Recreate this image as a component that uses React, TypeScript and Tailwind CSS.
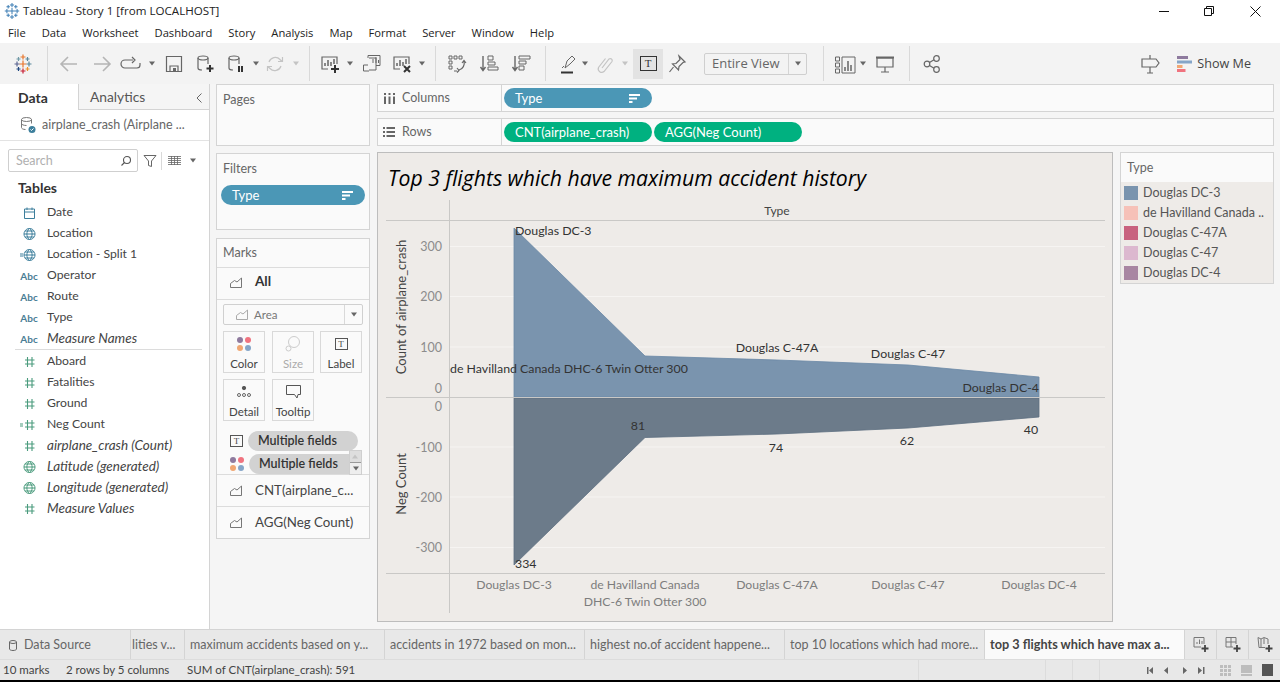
import React from 'react';

const ui = { fontFamily: '"Open Sans", "Noto Sans", sans-serif' };

const Ico: React.FC<{ children: React.ReactNode; className?: string; size?: number }> = ({ children, className = '', size = 22 }) => (
  <svg width={size} height={size} viewBox="0 0 22 22" fill="none" stroke="#666" strokeWidth="1.2" className={`shrink-0 ${className}`}>
    {children}
  </svg>
);

const Caret: React.FC<{ className?: string; light?: boolean }> = ({ className = '', light }) => (
  <svg width="8" height="5" viewBox="0 0 8 5" className={`shrink-0 ${className}`}>
    <path d="M1 0.5h6L4 4.5z" fill={light ? '#c4c4c4' : '#666'} />
  </svg>
);

const Sep: React.FC<{ className?: string }> = ({ className = '' }) => <div className={`w-px h-[35px] bg-[#d9d9d9] shrink-0 ${className}`} />;

const Cross: React.FC<{ x: number; y: number; c: string; r?: number }> = ({ x, y, c, r = 2.5 }) => (
  <path d={`M${x - r} ${y}h${r * 2}M${x} ${y - r}v${r * 2}`} stroke={c} strokeWidth="1.2" />
);

const TabLogo: React.FC<{ mono?: boolean; className?: string }> = ({ mono, className }) => (
  <Ico className={className}>
    <Cross x={11} y={11} c={mono ? '#3f7fb5' : '#e8762c'} r={3.5} />
    <Cross x={5} y={11} c={mono ? '#3f7fb5' : '#5b6591'} />
    <Cross x={17} y={11} c={mono ? '#3f7fb5' : '#59879b'} />
    <Cross x={11} y={4} c={mono ? '#3f7fb5' : '#e8762c'} />
    <Cross x={11} y={18} c={mono ? '#3f7fb5' : '#c72035'} />
    <Cross x={6.5} y={6} c={mono ? '#3f7fb5' : '#7099a6'} r={2} />
    <Cross x={15.5} y={6} c={mono ? '#3f7fb5' : '#5b879b'} r={2} />
    <Cross x={6.5} y={16} c={mono ? '#3f7fb5' : '#1f457e'} r={2} />
    <Cross x={15.5} y={16} c={mono ? '#3f7fb5' : '#eb912b'} r={2} />
  </Ico>
);

const Cylinder: React.FC = () => (
  <>
    <ellipse cx="9" cy="5" rx="5" ry="2" />
    <path d="M4 5v10c0 1.2 1.8 2 4 2M14 5v6" />
  </>
);

const BarsBox: React.FC = () => (
  <>
    <path d="M9 16H3V4h15v7" />
    <path d="M6 13v-3M9 13V7M12 13V9M15 11V6" strokeWidth="1.5" />
  </>
);

const Toolbar: React.FC = () => (
  <div className="h-[41px] bg-[#f3f3f3] flex items-center shrink-0 text-[#555]">
    <TabLogo className="ml-[12px]" />
    <Sep className="ml-[13px]" />
    <Ico className="ml-[10px]"><path d="M19 11H3M10 4l-7 7 7 7" stroke="#b5b5b5" strokeWidth="1.6" /></Ico>
    <Ico className="ml-[11px]"><path d="M3 11h16M12 4l7 7-7 7" stroke="#b5b5b5" strokeWidth="1.6" /></Ico>
    <Ico className="ml-[7px]"><path d="M13 7H5a3.500 3.500 0 0 0 0 8h12a3 3 0 0 0 3-3v-2M12 4l3 3-3 3" /></Ico>
    <Caret className="ml-[6px]" />
    <Ico className="ml-[7px]"><path d="M3.500 3.500h15v15h-15zM7 18v-5h8v5" /><path d="M10 15h3v3h-3z" fill="#666" stroke="none" /></Ico>
    <Ico className="ml-[9px]"><Cylinder /><path d="M16 12v7M12.500 15.500h7" strokeWidth="2" stroke="#333" /></Ico>
    <Ico className="ml-[9px]"><Cylinder /><path d="M14 13v6M17 13v6" strokeWidth="2" stroke="#333" /></Ico>
    <Caret className="ml-[5px]" />
    <Ico className="ml-[4px]"><path d="M5 9a6.500 6.500 0 0 1 11-2.500l2 2M17 13a6.500 6.500 0 0 1-11 2.500l-2-2M18.500 4v4.500H14M3.500 18v-4.500H8" stroke="#c4c4c4" /></Ico>
    <Caret className="ml-[6px]" light />
    <Sep className="ml-[9px]" />
    <Ico className="ml-[9px]"><BarsBox /><path d="M16 12v8M12 16h8" strokeWidth="2" stroke="#333" /></Ico>
    <Caret className="ml-[5px]" />
    <Ico className="ml-[7px]"><path d="M7 5V2.500h12v10h-4M8 5h7v12H8M2.500 12H7M2.500 12v6H8" strokeWidth="1" /><path d="M12 10V6M15 10V4M17.500 10V7" strokeWidth="1" /></Ico>
    <Ico className="ml-[8px]"><BarsBox /><path d="M13 13l6 6M19 13l-6 6" strokeWidth="2" stroke="#333" /></Ico>
    <Caret className="ml-[5px]" />
    <Sep className="ml-[9px]" />
    <Ico className="ml-[10px]"><path d="M3 3h3v3H3zM8 3h3v3H8zM13 3h3v3h-3zM3 8h3v3H3zM3 13h3v3H3zM8 18h3" strokeWidth="1" /><path d="M18 8c1 4-1 8-5 9M11 15l2 2.500-2 2M16 10l2-2.500 2 2.500" strokeWidth="1.200" /></Ico>
    <Ico className="ml-[10px]"><path d="M5 3v14M2.500 14l2.500 3.500L7.500 14" strokeWidth="1.400" /><path d="M10 3h5v4h-5zM10 9h7v3h-7zM10 14h10v3H10z" strokeWidth="1" /></Ico>
    <Ico className="ml-[10px]"><path d="M5 3v14M2.500 14l2.500 3.500L7.500 14" strokeWidth="1.400" /><path d="M9 3h11v3H9zM9 8h7v3H9zM9 13h5v4H9z" strokeWidth="1" /></Ico>
    <Sep className="ml-[13px]" />
    <Ico className="ml-[11px]"><path d="M8 15l2-7 5-5 3 3-5 5-5 4zM5 15l2-2" strokeWidth="1" /><path d="M4 19.500h12" strokeWidth="2" stroke="#333" /></Ico>
    <Caret className="ml-[2px]" />
    <Ico className="ml-[5px]"><path d="M8 15l7-9a2 2 0 0 1 3 2.500l-8 10a3.500 3.500 0 0 1-5.500-4l7-9" stroke="#c4c4c4" /></Ico>
    <Caret className="ml-[5px]" light />
    <div className="ml-[4px] w-[30px] h-[30px] bg-[#e3e3e3] flex items-center justify-center shrink-0">
      <div className="w-[17px] h-[15px] border border-[#333] flex items-center justify-center text-[11px] leading-none text-[#333]" style={{ fontFamily: '"Liberation Serif", serif' }}>T</div>
    </div>
    <Ico className="ml-[3px]"><path d="M13 3l6 6-2 .5-4 4-.5 3.500-6-6 3.500-.5 4-4zM7.500 14L3.500 19" strokeWidth="1.200" /></Ico>
    <div className="ml-[16px] w-[103px] h-[22px] border border-[#cfcfcf] rounded-[2px] flex items-center shrink-0 text-[13px] text-[#666]" style={ui}>
      <span className="flex-1 pl-[7px] leading-none">Entire View</span>
      <div className="w-[18px] h-full border-l border-[#d5d5d5] flex items-center justify-center"><Caret /></div>
    </div>
    <Sep className="ml-[16px]" />
    <Ico className="ml-[10px]"><path d="M1.500 4h4v4h-4zM1.500 10h4v4h-4zM1.500 16h4v4h-4zM8 4h13v16H8z" strokeWidth="1" /><path d="M11 18v-4M14 18V8M17 18v-6" strokeWidth="1.500" /></Ico>
    <Caret className="ml-[3px]" />
    <Ico className="ml-[7px]"><path d="M3 5h16v9H3zM11 14v5M7 19h8" /><path d="M2 4.500h18" strokeWidth="2" /></Ico>
    <Sep className="ml-[13px]" />
    <Ico className="ml-[11px]"><circle cx="6" cy="11" r="2.800" /><circle cx="15.500" cy="5.500" r="2.800" /><circle cx="15.500" cy="16.500" r="2.800" /><path d="M8.500 9.500l4.500-2.700M8.500 12.500l4.500 2.700" /></Ico>
    <Ico className="ml-auto"><path d="M11 2v4M11 14v6M8 20h6M3 6h14l3 4-3 4H3z" strokeWidth="1.200" /></Ico>
    <svg width="15" height="16" viewBox="0 0 15 16" className="ml-[16px] shrink-0">
      <path d="M0 0h11v3H0z" fill="#8e7a9e" />
      <path d="M0 4.500h15v3H0z" fill="#85a5c8" />
      <path d="M0 9h5.500v3H0z" fill="#f0a773" />
      <path d="M0 13h8.500v3H0z" fill="#f0737f" />
    </svg>
    <span className="ml-[5px] mr-[29px] pt-[1px] text-[12.600px] leading-none text-[#444]" style={ui}>Show Me</span>
  </div>
);

type FieldKind = 'date' | 'geo' | 'geoCalc' | 'abc' | 'num' | 'numCalc' | 'geoGreen';

const FieldIcon: React.FC<{ kind: FieldKind }> = ({ kind }) => {
  if (kind === 'abc') return <span className="w-[30px] text-center text-[10px] font-bold leading-none text-[#4a7d95]">Abc</span>;
  const color = kind === 'date' || kind === 'geo' || kind === 'geoCalc' ? '#3d7f9c' : '#4a9b7d';
  return (
    <svg width="30" height="14" viewBox="0 0 30 14" fill="none" stroke={color} strokeWidth="1" className="shrink-0">
      {kind === 'date' && <path d="M10.500 3h10v9.500h-10zM10.500 6h10M13 1.500v2.500M18 1.500v2.500" />}
      {(kind === 'geo' || kind === 'geoCalc' || kind === 'geoGreen') && (
        <path d="M15.500 1.500a5.500 5.500 0 1 0 .01 0zM10 7h11M15.500 1.500c-3.500 3-3.500 8 0 11M15.500 1.500c3.500 3 3.500 8 0 11M11 4h9M11 10h9" />
      )}
      {(kind === 'num' || kind === 'numCalc') && <path d="M13.500 2v10M18 2v10M11 5h9.500M11 9h9.500" strokeWidth="1.100" />}
      {(kind === 'geoCalc' || kind === 'numCalc') && <path d="M6 6h3M6 8h3" />}
    </svg>
  );
};

const fields: { name: string; kind: FieldKind; italic?: boolean }[] = [
  { name: 'Date', kind: 'date' },
  { name: 'Location', kind: 'geo' },
  { name: 'Location - Split 1', kind: 'geoCalc' },
  { name: 'Operator', kind: 'abc' },
  { name: 'Route', kind: 'abc' },
  { name: 'Type', kind: 'abc' },
  { name: 'Measure Names', kind: 'abc', italic: true },
];

const measures: { name: string; kind: FieldKind; italic?: boolean }[] = [
  { name: 'Aboard', kind: 'num' },
  { name: 'Fatalities', kind: 'num' },
  { name: 'Ground', kind: 'num' },
  { name: 'Neg Count', kind: 'numCalc' },
  { name: 'airplane_crash (Count)', kind: 'num', italic: true },
  { name: 'Latitude (generated)', kind: 'geoGreen', italic: true },
  { name: 'Longitude (generated)', kind: 'geoGreen', italic: true },
  { name: 'Measure Values', kind: 'num', italic: true },
];

const FieldRow: React.FC<{ name: string; kind: FieldKind; italic?: boolean }> = ({ name, kind, italic }) => (
  <div className="h-[21px] flex items-center pl-[14px]">
    <FieldIcon kind={kind} />
    <span className={`ml-[3px] leading-none text-[#444] whitespace-nowrap ${italic ? 'italic text-[13.500px]' : 'text-[12.200px]'}`}>{name}</span>
  </div>
);

const DataPane: React.FC = () => (
  <div className="w-[210px] shrink-0 bg-white border-r border-[#d4d4d4] flex flex-col">
    <div className="h-[26px] flex shrink-0">
      <div className="w-[78px] pl-[18px] flex items-center text-[14px] font-bold text-[#333]">Data</div>
      <div className="flex-1 bg-[#f5f5f5] border-l border-b border-[#d4d4d4] pl-[11px] pr-[6px] pt-[2px] flex items-center justify-between text-[13.800px] text-[#555]">
        <span>Analytics</span>
        <svg width="8" height="12" viewBox="0 0 8 12" fill="none" stroke="#666"><path d="M6.500 1.500L2 6l4.500 4.500" /></svg>
      </div>
    </div>
    <div className="h-[31px] flex items-center pl-[19px] border-b border-[#e3e3e3] shrink-0">
      <svg width="18" height="18" viewBox="0 0 18 18" fill="none" stroke="#777" strokeWidth="1" className="shrink-0">
        <ellipse cx="7.500" cy="3.500" rx="5" ry="2" />
        <path d="M2.500 3.500v8c0 1 1.500 2 4 2M12.500 3.500v4M2.500 7.500c0 1 2 2 5 2" />
        <circle cx="13" cy="13.500" r="3.500" fill="#3d7f9c" stroke="none" />
        <path d="M11.500 13.500l1 1 2-2" stroke="#fff" />
      </svg>
      <span className="ml-[5px] text-[12.500px] leading-none text-[#666] whitespace-nowrap">airplane_crash (Airplane ...</span>
    </div>
    <div className="flex items-center pl-[8px] mt-[8px] shrink-0">
      <div className="w-[130px] h-[23px] border border-[#cfcfcf] rounded-[2px] flex items-center justify-between pl-[7px] pr-[5px] pt-[1px] text-[12.500px] text-[#b0b0b0]">
        <span className="leading-none">Search</span>
        <svg width="12" height="12" viewBox="0 0 12 12" fill="none" stroke="#555" strokeWidth="1.100"><circle cx="7" cy="5" r="3.500" /><path d="M4.500 7.500L1.500 10.500" /></svg>
      </div>
      <svg width="14" height="14" viewBox="0 0 14 14" fill="none" stroke="#666" className="ml-[5px] shrink-0"><path d="M1 1.500h12L8.500 7v5.500l-3-1V7z" /></svg>
      <div className="ml-[4px] w-px h-[18px] bg-[#d9d9d9]" />
      <svg width="13" height="9" viewBox="0 0 13 9" fill="none" stroke="#666" className="ml-[6px] shrink-0"><path d="M0 .5h13M0 2.500h13M0 4.500h13M0 6.500h13M0 8.500h13M3.500 0v9M6.500 0v9M9.500 0v9" strokeWidth=".8" /></svg>
      <Caret className="ml-[8px]" />
    </div>
    <div className="mt-[6px] ml-[18px] h-[20px] flex items-center text-[14px] font-bold text-[#333] leading-none shrink-0">Tables</div>
    <div className="mt-[4px] shrink-0">
      {fields.map(f => <FieldRow key={f.name} {...f} />)}
    </div>
    <div className="ml-[15px] mr-[7px] h-px bg-[#dcdcdc] mb-[1px] shrink-0" />
    <div className="shrink-0">
      {measures.map(f => <FieldRow key={f.name} {...f} />)}
    </div>
  </div>
);

const SortGlyph: React.FC = () => (
  <svg width="11" height="9" viewBox="0 0 11 9" fill="#fff" className="shrink-0"><path d="M0 0h11v2H0zM0 3.500h8v2H0zM0 7h3.500v2H0z" /></svg>
);

const Pill: React.FC<{ label: string; className: string; sort?: boolean }> = ({ label, className, sort }) => (
  <div className={`h-[20px] rounded-full flex items-center justify-between pl-[11px] pr-[12px] text-[13px] text-white leading-none shrink-0 ${className}`}>
    <span className="whitespace-nowrap">{label}</span>
    {sort && <SortGlyph />}
  </div>
);

const AreaGlyph: React.FC<{ light?: boolean }> = ({ light }) => (
  <svg width="12" height="11" viewBox="0 0 12 11" fill="none" stroke={light ? '#aaa' : '#777'} className="shrink-0"><path d="M.5 10.500v-4l4-3 2.500 1.500 4.500-4v9.500z" /></svg>
);

const MarkBtn: React.FC<{ label: string; children: React.ReactNode; muted?: boolean; className?: string }> = ({ label, children, muted, className = '' }) => (
  <div className={`w-[42px] h-[42px] border border-[#d9d9d9] flex flex-col items-center justify-end text-[11.500px] leading-[16px] ${muted ? 'text-[#aaa]' : 'text-[#444]'} ${className}`}>
    <div className="flex-1 flex items-center justify-center">{children}</div>
    <span>{label}</span>
  </div>
);

const Dots: React.FC = () => (
  <svg width="16" height="16" viewBox="0 0 16 16" className="shrink-0">
    <circle cx="4" cy="4" r="3" fill="#8e7a9e" />
    <circle cx="12" cy="4" r="3" fill="#f0737f" />
    <circle cx="4" cy="12" r="3" fill="#f0a773" />
    <circle cx="12" cy="12" r="3" fill="#85a5c8" />
  </svg>
);

const TBox: React.FC = () => (
  <div className="w-[13px] h-[12px] border border-[#555] flex items-center justify-center text-[9px] leading-none text-[#444]" style={{ fontFamily: '"Liberation Serif", serif' }}>T</div>
);

const Card: React.FC<{ title: string; className: string; children?: React.ReactNode }> = ({ title, className, children }) => (
  <div className={`border border-[#d4d4d4] bg-[#fafafa] shrink-0 ${className}`}>
    <div className="pl-[6px] h-[31px] flex items-center text-[12.500px] text-[#666] leading-none">{title}</div>
    {children}
  </div>
);

const ShelvesColumn: React.FC = () => (
  <div className="w-[154px] ml-[6px] flex flex-col shrink-0">
    <Card title="Pages" className="h-[62px]" />
    <Card title="Filters" className="h-[77px] mt-[7px]">
      <div className="px-[4px]"><Pill label="Type" sort className="bg-[#4b97b6]" /></div>
    </Card>
    <div className="h-[301px] mt-[8px] border border-[#d4d4d4] bg-[#fafafa] flex flex-col relative">
      <div className="pl-[6px] h-[29px] flex items-center text-[12.500px] text-[#666] leading-none border-b border-[#dcdcdc] shrink-0">Marks</div>
      <div className="h-[32px] flex items-center pl-[13px] pb-[3px] border-b border-[#dcdcdc] shrink-0">
        <AreaGlyph />
        <span className="ml-[13px] text-[13.500px] font-bold text-[#333] leading-none">All</span>
      </div>
      <div className="mt-[4px] mx-[6px] h-[21px] w-[140px] border border-[#d0d0d0] rounded-[2px] flex items-center shrink-0">
        <span className="ml-[12px]"><AreaGlyph light /></span>
        <span className="ml-[6px] flex-1 text-[11.500px] text-[#777] leading-none">Area</span>
        <div className="w-[18px] h-full border-l border-[#d9d9d9] flex items-center justify-center"><Caret /></div>
      </div>
      <div className="mt-[6px] ml-[6px] flex gap-x-[6px] shrink-0">
        <MarkBtn label="Color"><Dots /></MarkBtn>
        <MarkBtn label="Size" muted className="ml-[1px]">
          <svg width="18" height="18" viewBox="0 0 18 18" fill="none" stroke="#ccc"><circle cx="10" cy="7" r="5.500" /><circle cx="4.500" cy="13.500" r="2.500" /></svg>
        </MarkBtn>
        <MarkBtn label="Label"><TBox /></MarkBtn>
      </div>
      <div className="mt-[6px] ml-[6px] flex gap-x-[6px] shrink-0">
        <MarkBtn label="Detail">
          <svg width="14" height="12" viewBox="0 0 14 12" fill="none" stroke="#555" strokeWidth=".9"><circle cx="7" cy="2" r="1.700" fill="#555" /><circle cx="2" cy="9" r="1.500" /><circle cx="7" cy="9" r="1.500" /><circle cx="12" cy="9" r="1.500" /></svg>
        </MarkBtn>
        <MarkBtn label="Tooltip" className="ml-[1px]">
          <svg width="15" height="14" viewBox="0 0 15 14" fill="none" stroke="#555"><path d="M.5.500h14v9h-2.500l-1 3.500-2.500-3.500H.5z" /></svg>
        </MarkBtn>
      </div>
      <div className="mt-[10px] flex items-center pl-[13px] shrink-0">
        <TBox />
        <div className="ml-[5px] w-[110px] h-[20px] rounded-full bg-[#d2d2d2] pl-[10px] flex items-center text-[12.500px] text-[#333] font-semibold leading-none">Multiple fields</div>
      </div>
      <div className="mt-[3px] flex items-center pl-[12px] shrink-0">
        <Dots />
        <div className="ml-[4px] w-[112px] h-[20px] rounded-l-full bg-[#d2d2d2] pl-[10px] flex items-center text-[12.500px] text-[#333] font-semibold leading-none">Multiple fields</div>
      </div>
      <div className="absolute left-[132px] top-[211px] w-[13px] h-[25px] border border-[#cfcfcf] bg-[#dedede] flex flex-col">
        <div className="flex-1 flex items-center justify-center rotate-180"><Caret light /></div>
        <div className="flex-1 flex items-center justify-center bg-[#eeeeee] border-t border-[#999]"><Caret /></div>
      </div>
      <div className="h-[32px] border-t border-[#dcdcdc] flex items-center pl-[13px] shrink-0">
        <AreaGlyph />
        <span className="ml-[13px] text-[13.300px] text-[#444] leading-none whitespace-nowrap">CNT(airplane_c...</span>
      </div>
      <div className="h-[32px] border-t border-[#dcdcdc] flex items-center pl-[13px] shrink-0">
        <AreaGlyph />
        <span className="ml-[13px] text-[13.300px] text-[#444] leading-none whitespace-nowrap">AGG(Neg Count)</span>
      </div>
    </div>
  </div>
);

const Shelf: React.FC<{ label: string; icon: React.ReactNode; children: React.ReactNode; className?: string }> = ({ label, icon, children, className = '' }) => (
  <div className={`h-[28px] border border-[#d4d4d4] bg-[#fafafa] flex shrink-0 ${className}`}>
    <div className="w-[124px] border-r border-[#d4d4d4] flex items-center pl-[5px] text-[12.500px] text-[#666] leading-none shrink-0">
      <span className="w-[12px] flex justify-center">{icon}</span>
      <span className="ml-[7px]">{label}</span>
    </div>
    <div className="flex items-center pl-[2px] gap-x-[2px]">{children}</div>
  </div>
);

const tickText = 'fill-[#8c8c8c] text-[12.500px]';
const xText = 'fill-[#7d7d7d] text-[12.200px]';
const markText = 'fill-[#333] text-[12.350px]';

const Chart: React.FC = () => (
  <svg width="734" height="421" viewBox="378 200 734 421" style={{ fontFamily: 'Lato, sans-serif' }} className="shrink-0">
    {[246.5, 296.5, 347, 447, 497, 547.5].map(y => (
      <path key={y} d={`M450 ${y}H1105`} stroke="#f6f4f2" strokeWidth="1" />
    ))}
    <path d="M514 397V228L645 356L777 360L908 365L1039 377V397Z" fill="#7a94ae" stroke="#6a88a6" strokeWidth=".8" />
    <path d="M514 398V565L645 437.500L777 434L908 428L1039 417V398Z" fill="#6c7b8a" stroke="#5d6e80" strokeWidth=".8" />
    <path d="M449.500 200V613M386 220.500H1105M386 397.500H1105M386 573.500H1105" stroke="#c9c8c6" strokeWidth="1" />
    <text x="777" y="215" textAnchor="middle" className="fill-[#444] text-[12px]">Type</text>
    <text transform="translate(406 307) rotate(-90)" textAnchor="middle" className="fill-[#444] text-[13px]">Count of airplane_crash</text>
    <text transform="translate(406 484) rotate(-90)" textAnchor="middle" className="fill-[#444] text-[13px]">Neg Count</text>
    {[['300', 251], ['200', 301], ['100', 352], ['0', 393], ['0', 411], ['-100', 452], ['-200', 502], ['-300', 552]].map(([t, y]) => (
      <text key={`${t}${y}`} x="442" y={y} textAnchor="end" className={tickText}>{t}</text>
    ))}
    <text x="515" y="235" className={markText}>Douglas DC-3</text>
    <text x="450" y="373" className={markText}>de Havilland Canada DHC-6 Twin Otter 300</text>
    <text x="777" y="352" textAnchor="middle" className={markText}>Douglas C-47A</text>
    <text x="908" y="358" textAnchor="middle" className={markText}>Douglas C-47</text>
    <text x="1039" y="392" textAnchor="end" className={markText}>Douglas DC-4</text>
    <text x="638" y="430" textAnchor="middle" className={markText}>81</text>
    <text x="776" y="452" textAnchor="middle" className={markText}>74</text>
    <text x="907" y="445" textAnchor="middle" className={markText}>62</text>
    <text x="1031" y="434" textAnchor="middle" className={markText}>40</text>
    <text x="515" y="568" className={markText}>334</text>
    <text x="514" y="589" textAnchor="middle" className={xText}>Douglas DC-3</text>
    <text x="645" y="589" textAnchor="middle" className={xText}>de Havilland Canada</text>
    <text x="645" y="606" textAnchor="middle" className={xText}>DHC-6 Twin Otter 300</text>
    <text x="777" y="589" textAnchor="middle" className={xText}>Douglas C-47A</text>
    <text x="908" y="589" textAnchor="middle" className={xText}>Douglas C-47</text>
    <text x="1039" y="589" textAnchor="middle" className={xText}>Douglas DC-4</text>
  </svg>
);

const legend = [
  { name: 'Douglas DC-3', swatch: 'bg-[#7a94ae]' },
  { name: 'de Havilland Canada ..', swatch: 'bg-[#f6c1b8]' },
  { name: 'Douglas C-47A', swatch: 'bg-[#c8627f]' },
  { name: 'Douglas C-47', swatch: 'bg-[#dcb8cf]' },
  { name: 'Douglas DC-4', swatch: 'bg-[#a886a2]' },
];

const Workspace: React.FC = () => (
  <div className="ml-[7px] flex-1 flex flex-col min-w-0 pr-[6px]">
    <Shelf label="Columns" icon={<svg width="11" height="11" viewBox="0 0 11 11" fill="#666"><path d="M0 0h2v2H0zM4.500 0h2v2h-2zM9 0h2v2H9zM0 3.500h2V11H0zM4.500 3.500h2V11h-2zM9 3.500h2V11H9z" /></svg>}>
      <Pill label="Type" sort className="w-[148px] bg-[#4b97b6]" />
    </Shelf>
    <Shelf label="Rows" className="mt-[6px]" icon={<svg width="12" height="10" viewBox="0 0 12 10" fill="#666"><path d="M0 0h2v2H0zM3.500 0H12v2H3.500zM0 4h2v2H0zM3.500 4H12v2H3.500zM0 8h2v2H0zM3.500 8H12v2H3.500z" /></svg>}>
      <Pill label="CNT(airplane_crash)" className="w-[148px] bg-[#00b180]" />
      <Pill label="AGG(Neg Count)" className="w-[148px] bg-[#00b180]" />
    </Shelf>
    <div className="mt-[6px] flex items-start">
      <div className="w-[736px] h-[470px] border border-[#bdbdbd] bg-[#eeebe8] flex flex-col shrink-0">
        <div className="h-[47px] pl-[10px] pt-[9px] text-[21.200px] italic font-medium leading-[32px] text-black whitespace-nowrap shrink-0" style={{ fontFamily: '"Open Sans", sans-serif' }}>Top 3 flights which have maximum accident history</div>
        <Chart />
      </div>
      <div className="ml-[7px] w-[154px] h-[132px] border border-[#d4d4d4] flex flex-col shrink-0">
        <div className="h-[29px] bg-[#fafafa] pl-[6px] pt-[2px] flex items-center text-[12.500px] text-[#666] leading-none shrink-0">Type</div>
        <div className="flex-1 bg-[#eeebe8] pl-[3px] pt-[1px]">
          {legend.map(l => (
            <div key={l.name} className="h-[20px] flex items-center">
              <div className={`w-[14px] h-[14px] ${l.swatch} shrink-0`} />
              <span className="ml-[5px] text-[12.500px] text-[#555] leading-none whitespace-nowrap">{l.name}</span>
            </div>
          ))}
        </div>
      </div>
    </div>
  </div>
);

const tabs = [
  { name: 'lities v...', w: 'w-[54px] pl-[1px]' },
  { name: 'maximum accidents based on y...', w: 'w-[200px] pl-[5px]' },
  { name: 'accidents in 1972 based on mon...', w: 'w-[200px] pl-[5px]' },
  { name: 'highest no.of accident happene...', w: 'w-[200px] pl-[5px]' },
  { name: 'top 10 locations which had more...', w: 'w-[200px] pl-[5px]' },
];

const SheetTabs: React.FC = () => (
  <div className="h-[30px] bg-[#e8e8e8] border-t border-[#d4d4d4] flex shrink-0 text-[12.500px] text-[#666]">
    <div className="w-[131px] flex items-center pl-[9px] pt-[2px] border-r border-[#d4d4d4] shrink-0">
      <svg width="8" height="11" viewBox="0 0 8 11" fill="none" stroke="#666" className="shrink-0"><ellipse cx="4" cy="2" rx="3.500" ry="1.500" /><path d="M.5 2v7c0 .8 1.500 1.500 3.500 1.500s3.500-.7 3.500-1.500V2" /></svg>
      <span className="ml-[7px] leading-none">Data Source</span>
    </div>
    {tabs.map(t => (
      <div key={t.name} className={`${t.w} flex items-center pt-[2px] border-r border-[#d4d4d4] whitespace-nowrap overflow-hidden shrink-0`}>
        <span className="leading-none">{t.name}</span>
      </div>
    ))}
    <div className="w-[199px] bg-[#fafafa] pl-[5px] flex items-center font-bold text-[#444] text-[12.700px] leading-none whitespace-nowrap shrink-0">top 3 flights which have max a...</div>
    {[0, 1, 2].map(i => (
      <div key={i} className="flex-1 border-l border-[#d4d4d4] flex items-center justify-center">
        <svg width="17" height="17" viewBox="0 0 17 17" fill="none" stroke="#777" strokeWidth="1">
          {i === 0 && <path d="M9 11H2V1.500h10V8M5 8V6M7.500 8V3.500M10 8V5" />}
          {i === 1 && <path d="M9 11H2V1.500h10V8M2 6h10M7 1.500V11" />}
          {i === 2 && <path d="M9 11.500H3l-1-10 3 1.500 3-1.500 4 1.500V8M5 3v8M8 2v6" />}
          <path d="M13 9v7M9.500 12.500h7" stroke="#444" strokeWidth="1.800" />
        </svg>
      </div>
    ))}
  </div>
);

const StatusBar: React.FC = () => (
  <div className="h-[21px] bg-[#e8e8e8] border-t border-[#dcdcdc] flex items-center text-[11.500px] text-[#444] shrink-0 relative" style={{ fontFamily: 'Lato, sans-serif' }}>
    <span className="ml-[3px] w-[63px] leading-none">10 marks</span>
    <span className="w-[121px] leading-none">2 rows by 5 columns</span>
    <span className="leading-none">SUM of CNT(airplane_crash): 591</span>
    <div className="ml-auto flex items-center h-full">
      <div className="w-[127px] h-full border-l border-[#dcdcdc]" />
      <div className="w-[27px] h-full border-l border-[#dcdcdc]" />
      <div className="w-[27px] h-full border-l border-[#dcdcdc]" />
      <div className="w-[48px] h-full border-l border-[#dcdcdc]" />
      <svg width="58" height="9" viewBox="0 0 58 9" fill="#666" className="shrink-0">
        <path d="M0 1h1.500v7H0zM6 1v7L2 4.500zM21 1v7l-4-3.500zM36 1v7l4-3.500zM51 1v7l4-3.500zM56 1h1.500v7H56z" />
      </svg>
      <div className="ml-[15px] grid grid-cols-3 gap-[1px] w-[11px] shrink-0">
        {[0, 1, 2, 3, 4, 5, 6, 7, 8].map(i => <div key={i} className="h-[3px] bg-[#bdbdbd]" />)}
      </div>
      <div className="ml-[10px] w-[11px] flex flex-col gap-[1px] shrink-0">
        <div className="h-[8px] bg-[#bdbdbd]" />
        <div className="h-[2px] bg-[#bdbdbd]" />
      </div>
      <div className="ml-[10px] mr-[7px] w-[11px] h-[12px] bg-[#555] shrink-0" />
    </div>
  </div>
);

export default function App() {
  return (
    <div className="w-[1280px] h-[682px] bg-[#f5f5f5] flex flex-col overflow-hidden" style={{ fontFamily: 'Lato, sans-serif' }}>
      <div className="h-[22px] bg-white flex items-center shrink-0" style={ui}>
        <TabLogo mono className="ml-[1px] scale-[.85]" />
        <span className="text-[11.600px] leading-none text-[#222]">Tableau - Story 1 [from LOCALHOST]</span>
        <div className="ml-auto flex items-center">
          <svg width="10" height="10" viewBox="0 0 10 10" fill="none" stroke="#111" className="mr-[35px]"><path d="M0 5.500h10" /></svg>
          <svg width="10" height="10" viewBox="0 0 10 10" fill="none" stroke="#111" className="mr-[36px]"><path d="M.5 2.500h7v7h-7zM2.500 2.500v-2h7v7h-2" /></svg>
          <svg width="11" height="11" viewBox="0 0 11 11" fill="none" stroke="#111" className="mr-[19px]"><path d="M.5.500l10 10M10.500.500l-10 10" /></svg>
        </div>
      </div>
      <div className="h-[21px] bg-white flex items-center pl-[8px] gap-x-[16px] text-[11.200px] leading-none text-[#222] shrink-0" style={ui}>
        {['File', 'Data', 'Worksheet', 'Dashboard', 'Story', 'Analysis', 'Map', 'Format', 'Server', 'Window', 'Help'].map(m => (
          <span key={m}>{m}</span>
        ))}
      </div>
      <Toolbar />
      <div className="flex-1 flex min-h-0">
        <DataPane />
        <ShelvesColumn />
        <Workspace />
      </div>
      <SheetTabs />
      <StatusBar />
      <div className="h-[2px] bg-black shrink-0" />
    </div>
  );
}
